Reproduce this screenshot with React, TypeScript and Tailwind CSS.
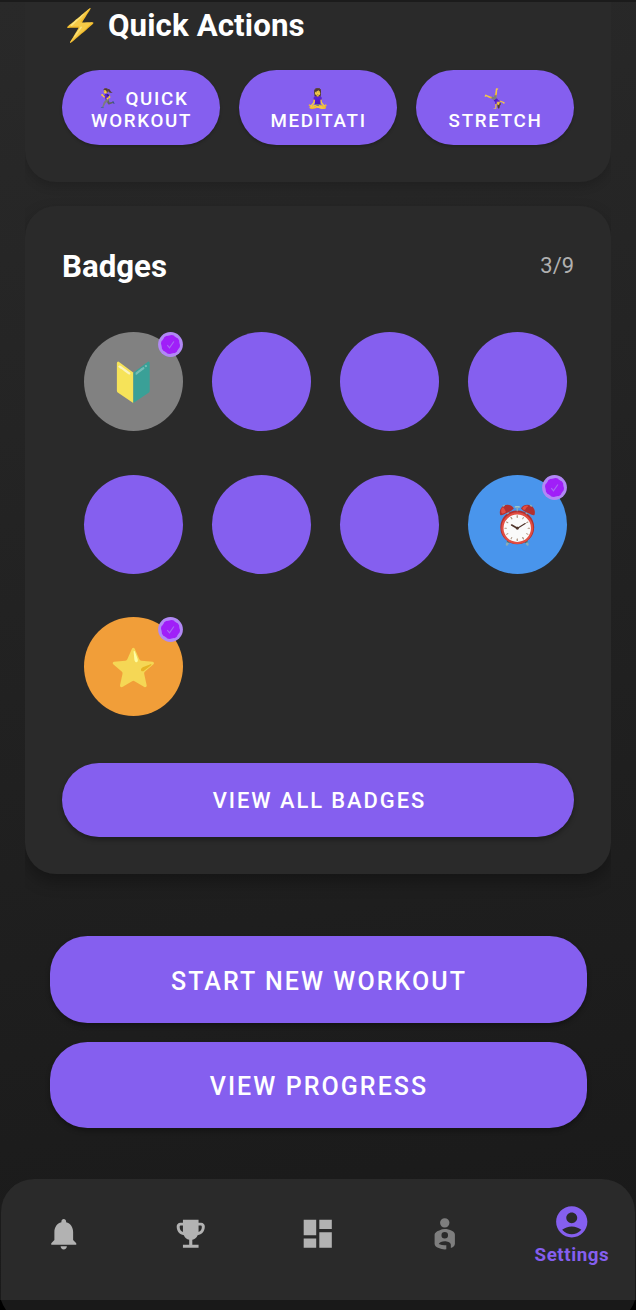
import type { ReactNode } from "react";

const quickActions = [
  { emoji: "🏃‍♀️", inline: "QUICK", label: "WORKOUT" },
  { emoji: "🧘‍♀️", inline: "", label: "MEDITATI" },
  { emoji: "🤸‍♀️", inline: "", label: "STRETCH" },
];

const badges = [
  { emoji: "🔰", color: "bg-[#818181]" },
  { emoji: "", color: "bg-[#855fef]" },
  { emoji: "", color: "bg-[#855fef]" },
  { emoji: "", color: "bg-[#855fef]" },
  { emoji: "", color: "bg-[#855fef]" },
  { emoji: "", color: "bg-[#855fef]" },
  { emoji: "", color: "bg-[#855fef]" },
  { emoji: "⏰", color: "bg-[#4995ec]" },
  { emoji: "⭐", color: "bg-[#f19e39]" },
];

function EarnedMark() {
  return (
    <svg viewBox="0 0 25 25" className="absolute top-0 right-0 size-[25px]">
      <circle cx="12.5" cy="12.5" r="12.4" fill="#b188f5" />
      <circle cx="12.5" cy="12.5" r="9.2" fill="#a01ff8" />
      <circle cx="12.5" cy="12.5" r="8.9" fill="none" stroke="#a01ff8" strokeWidth="1.2" strokeDasharray="3.4 3.59" />
      <path d="M9.3 13.2l2.2 2.6 4.4-6.3" fill="none" stroke="#a969f2" strokeWidth="1.2" />
    </svg>
  );
}

function Badge({ emoji, color }: { emoji: string; color: string }) {
  return (
    <div className={`relative flex size-[99px] items-center justify-center rounded-full ${color}`}>
      {emoji && <span className="pt-[2px] text-[37.5px] leading-[44px] saturate-[.8]">{emoji}</span>}
      {emoji && <EarnedMark />}
    </div>
  );
}

function NavIcon({ children }: { children: ReactNode }) {
  return (
    <svg viewBox="0 0 24 24" fill="currentColor" className="size-[37.5px]">
      {children}
    </svg>
  );
}

export default function App() {
  return (
    <div className="flex h-[1310px] w-[636px] flex-col overflow-hidden bg-linear-170 from-[#292929] to-[#191919] font-['Roboto',sans-serif] text-white">
      <div className="h-[2px] shrink-0 bg-[#1b1b1b]" />

      <section className="mx-[25px] h-[179.5px] shrink-0 rounded-b-[31px] bg-[#2a2a2a] px-[37px] shadow-[0_5px_10px_rgba(0,0,0,0.15)] [clip-path:inset(0_0_-30px_0)]">
        <h2 className="pt-[5px] text-[31.25px] leading-[37px] font-bold tracking-[0.1px] whitespace-pre">
          <span className="-ml-px saturate-[.8]">⚡</span> Quick Actions
        </h2>
        <div className="mt-[26px] grid grid-cols-3 gap-[19px]">
          {quickActions.map((a) => (
            <button
              key={a.label}
              className="flex h-[74.5px] flex-col items-center justify-center rounded-full bg-[#855fef] pt-[6px] pl-[1px] text-[18.75px] leading-[22px] font-medium tracking-[1.67px] shadow-[0_2px_3px_rgba(0,0,0,0.18)]"
            >
              <span className="whitespace-pre">
                <span className="saturate-[.8]">{a.emoji}</span>
                {a.inline && ` ${a.inline}`}
              </span>
              <span>{a.label}</span>
            </button>
          ))}
        </div>
      </section>

      <section className="mx-[25px] mt-[24.5px] flex h-[668px] shrink-0 flex-col rounded-[31px] bg-[#2a2a2a] px-[37px] shadow-[0_8px_16px_rgba(0,0,0,0.3)] [clip-path:inset(-20px_0_-30px_0)]">
        <header className="mt-[41.6px] flex h-[37px] items-center justify-between">
          <h2 className="text-[31.25px] leading-[37px] font-bold">Badges</h2>
          <span className="text-[21.9px] text-[#b0b0b0]">3/9</span>
        </header>
        <div className="mt-[47.4px] -mr-[21.6px] grid grid-cols-4 gap-y-[43.7px] pl-[21.6px]">
          {badges.map((b, i) => (
            <Badge key={i} {...b} />
          ))}
        </div>
        <button className="mt-[46.5px] h-[74px] shrink-0 rounded-full bg-[#855fef] pt-[3px] pl-[3px] text-[21.9px] leading-[26px] font-medium tracking-[1.95px] shadow-[0_3px_5px_rgba(0,0,0,0.3)]">
          VIEW ALL BADGES
        </button>
      </section>

      <div className="mx-[49.5px] mt-[62px] flex shrink-0 flex-col gap-[19.3px]">
        <button className="h-[86.5px] rounded-[37.5px] bg-[#855fef] pt-[5px] pl-[2px] text-[25px] leading-[30px] font-medium tracking-[2.07px] shadow-[0_3px_5px_rgba(0,0,0,0.3)]">
          START NEW WORKOUT
        </button>
        <button className="h-[86.5px] rounded-[37.5px] bg-[#855fef] pt-[4px] pl-[2px] text-[25px] leading-[30px] font-medium tracking-[2.07px] shadow-[0_3px_5px_rgba(0,0,0,0.3)]">
          VIEW PROGRESS
        </button>
      </div>

      <div className="mt-[50.7px] h-[131px] shrink-0">
        <nav className="mx-px h-[121px] rounded-t-[33px] bg-[#2a2a2a] text-[#b2b2b2]">
          <div className="-mx-px grid grid-cols-5">
            <div className="flex justify-center pt-[36px]">
              <NavIcon>
                <path d="M12 22c1.1 0 2-.9 2-2h-4c0 1.1.89 2 2 2zm6-6v-5c0-3.07-1.64-5.64-4.5-6.32V4c0-.83-.67-1.5-1.5-1.5s-1.5.67-1.5 1.5v.68C7.63 5.36 6 7.92 6 11v5l-2 2v1h16v-1l-2-2z" />
              </NavIcon>
            </div>
            <div className="flex justify-center pt-[36px]">
              <NavIcon>
                <path
                  fillRule="evenodd"
                  d="M7 3h10v1.9h1.6C20.1 4.9 21 6 21 7.4c0 3-1.9 5.3-4.6 5.5-.6 1.5-1.9 2.6-3.4 2.9V19h4v2H7v-2h4v-3.2c-1.6-.3-2.8-1.4-3.4-2.9C4.9 12.7 3 10.4 3 7.4 3 6 3.9 4.9 5.4 4.9H7zM7 6.7H5.7C5.1 6.7 4.9 7.1 4.9 7.7c0 1.5.9 2.8 2.1 3.2zM17 6.7v4.2c1.2-.4 2.1-1.7 2.1-3.2 0-.6-.2-1-.8-1z"
                />
              </NavIcon>
            </div>
            <div className="flex justify-center pt-[36px]">
              <NavIcon>
                <path d="M3 13h8V3H3v10zm0 8h8v-6H3v6zm10 0h8V11h-8v10zm0-18v6h8V3h-8z" />
              </NavIcon>
            </div>
            <div className="flex justify-center pt-[36px] text-[#7e7e7e]">
              <NavIcon>
                <path
                  fillRule="evenodd"
                  d="M12 2a3 3 0 1 1 0 6 3 3 0 0 1 0-6zM12 9c1.63 0 3.12.35 4.5 1.05 1.34.71 2 1.56 2 2.56v5.77c0 1.12-.86 2.06-2.61 2.81V19c0-.95-.86-1.62-2.58-2.03-.56-.13-1-.19-1.31-.19-.87 0-1.7.17-2.46.52-.77.34-1.23.78-1.38 1.31 1.34.53 2.62.8 3.84.8l1-.1v2.63L12 22c-1.37 0-2.67-.28-3.89-.81-1.75-.75-2.61-1.69-2.61-2.81v-5.77c0-1.15 1-2.11 3-2.77C9.67 9.28 10.83 9 12 9zm0 1.9a2.1 2.1 0 1 0 0 4.2 2.1 2.1 0 0 0 0-4.2z"
                />
              </NavIcon>
            </div>
            <div className="flex flex-col items-center pt-[24px] pr-px text-[#855fef]">
              <NavIcon>
                <path d="M12 2C6.48 2 2 6.48 2 12s4.48 10 10 10 10-4.48 10-10S17.52 2 12 2zm0 4c1.93 0 3.5 1.57 3.5 3.5S13.93 13 12 13s-3.5-1.57-3.5-3.5S10.07 6 12 6zm0 14c-2.03 0-4.43-.82-6.14-2.88C7.55 15.8 9.68 15 12 15s4.45.8 6.14 2.12C16.43 19.18 14.03 20 12 20z" />
              </NavIcon>
              <span className="mt-[4px] text-[18.75px] leading-[22px] font-bold tracking-[0.55px]">Settings</span>
            </div>
          </div>
        </nav>
        <div className="h-[10px] bg-black">
          <div className="h-[10px] bg-[#191919] [clip-path:polygon(1px_0,635px_0,633px_5px,630px_10px,6px_10px,3px_5px)]" />
        </div>
      </div>
    </div>
  );
}
